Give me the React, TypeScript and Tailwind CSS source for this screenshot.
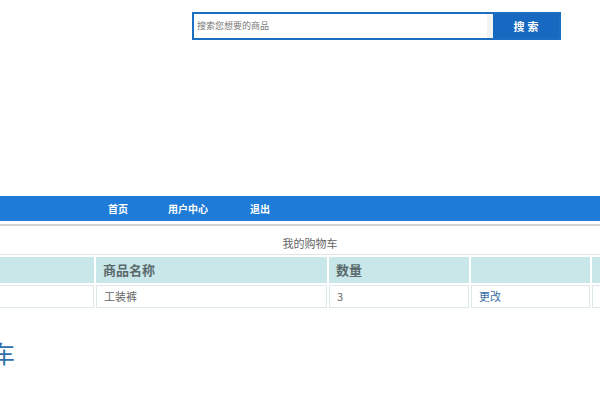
const font = "font-['Noto_Sans_CJK_SC','Noto_Sans',sans-serif]";

const navItems = [
  { label: "首页", className: "ml-[108px]" },
  { label: "用户中心", className: "ml-[40px]" },
  { label: "退出", className: "ml-[42px]" },
];

export default function App() {
  return (
    <div className={`w-[600px] h-[400px] overflow-hidden bg-white ${font}`}>
      {/* search */}
      <div className="pt-[12px] pl-[192px] flex">
        <div className="flex h-[28px] w-[369px] border-[2px] border-[#1b6ec2] bg-white">
          <div className="flex-1 flex items-center bg-white">
            <span className="pl-[3px] text-[9px] text-[#777]">搜索您想要的商品</span>
          </div>
          <div className="w-[6px] bg-[#f3f3f3]" />
          <button className="w-[66px] bg-[#1668c1] text-white text-[11px] font-bold tracking-[3px] pl-[3px]">
            搜索
          </button>
        </div>
      </div>

      {/* nav */}
      <div className="mt-[156px] h-[25px] bg-[#1e7bd7] flex items-center">
        {navItems.map((item) => (
          <span key={item.label} className={`${item.className} text-white text-[10px] font-bold`}>
            {item.label}
          </span>
        ))}
      </div>
      <div className="mt-[3px] h-[2px] bg-[#d2d2d2]" />

      {/* cart table */}
      <table className="ml-[-60px] w-[740px] border-separate border-spacing-[2px] border-t border-[#dde5e5] text-[11px]">
        <caption className="h-[28px] leading-[34px] text-[#666] text-[11px] caption-top">我的购物车</caption>
        <thead>
          <tr className="h-[26px]">
            <th className="w-[152px] bg-[#c9e6e8]" />
            <th className="w-[231px] bg-[#c9e6e8] text-left pl-[7px] text-[13px] font-bold text-[#5a6a6c]">商品名称</th>
            <th className="w-[140px] bg-[#c9e6e8] text-left pl-[7px] text-[13px] font-bold text-[#5a6a6c]">数量</th>
            <th className="w-[119px] bg-[#c9e6e8]" />
            <th className="bg-[#c9e6e8]" />
          </tr>
        </thead>
        <tbody>
          <tr className="h-[23px]">
            <td className="border border-[#dde9e9]" />
            <td className="border border-[#dde9e9] pl-[7px] text-[#666]">工装裤</td>
            <td className="border border-[#dde9e9] pl-[7px] text-[#666]">3</td>
            <td className="border border-[#dde9e9] pl-[7px] text-[#3a6fa6]">更改</td>
            <td className="border border-[#dde9e9]" />
          </tr>
        </tbody>
      </table>

      <h2 className="mt-[28px] ml-[-105px] text-[24px] leading-[30px] text-[#2f70a8] font-normal">我的购物车</h2>
    </div>
  );
}
